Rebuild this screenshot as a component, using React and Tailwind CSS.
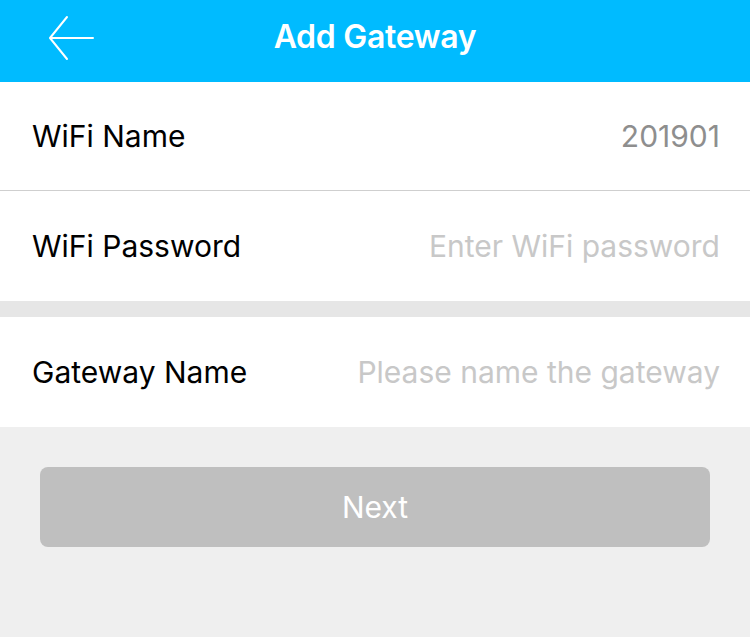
export default function App() {
  const font = { fontFamily: 'Inter, "Noto Sans", sans-serif' }
  return (
    <div className="w-[750px] h-[637px] bg-[#efefef] overflow-hidden" style={font}>
      {/* Header */}
      <div className="relative h-[82px] bg-[#00bbff] flex items-center justify-center pb-[8px]">
        <svg className="absolute left-[48px] top-[15px]" width="48" height="46" viewBox="0 0 48 46" fill="none">
          <path d="M19 2 L2 23 L19 44 M2 23 H45" stroke="white" strokeWidth="2" strokeLinecap="round" strokeLinejoin="round" />
        </svg>
        <h1 className="text-white text-[32px] font-semibold tracking-[-0.3px]">Add Gateway</h1>
      </div>

      {/* WiFi section */}
      <div className="bg-white">
        <div className="h-[109px] flex items-center justify-between pl-[32px] pr-[30px] border-b border-[#cfcfcf]">
          <span className="text-[30px] text-black">WiFi Name</span>
          <span className="text-[30px] text-[#8e8e8e]">201901</span>
        </div>
        <div className="h-[110px] flex items-center justify-between pl-[32px] pr-[30px]">
          <span className="text-[30px] text-black">WiFi Password</span>
          <span className="text-[30px] text-[#c8c8c8]">Enter WiFi password</span>
        </div>
      </div>

      <div className="h-[16px] bg-[#e6e6e6]" />

      <div className="bg-white h-[110px] flex items-center justify-between pl-[32px] pr-[30px]">
        <span className="text-[30px] text-black">Gateway Name</span>
        <span className="text-[30px] text-[#c8c8c8]">Please name the gateway</span>
      </div>

      <div className="px-[40px] pt-[40px]">
        <button className="w-full h-[80px] rounded-[8px] bg-[#bfbfbf] text-white text-[30px]">Next</button>
      </div>
    </div>
  )
}
